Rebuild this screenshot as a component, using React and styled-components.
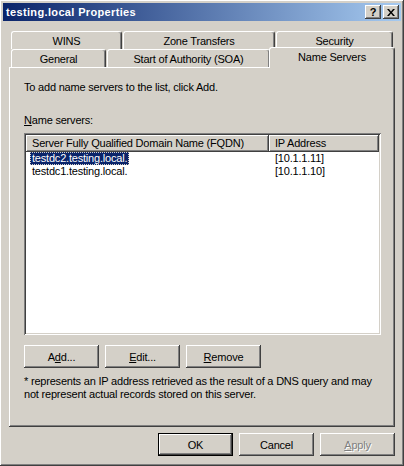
import styled, { createGlobalStyle } from "styled-components";

const Global = createGlobalStyle`
  html, body { margin: 0; padding: 0; background: #d4d0c8; }
  * { box-sizing: border-box; }
  body {
    font-family: "Liberation Sans", Arial, sans-serif;
    font-size: 11px;
    letter-spacing: -0.2px;
    color: #000;
  }
`;

const raised = `
  box-shadow: inset -1px -1px #404040, inset 1px 1px #ffffff,
    inset -2px -2px #808080, inset 2px 2px #d4d0c8;
`;

const Window = styled.div`
  width: 404px;
  height: 466px;
  padding: 3px;
  background: #d4d0c8;
  ${raised}
  display: flex;
  flex-direction: column;
`;

const TitleBar = styled.div`
  height: 18px;
  display: flex;
  align-items: center;
  padding: 0 2px 0 2px;
  background: linear-gradient(to right, #0a246a, #a6caf0);
`;

const Title = styled.span`
  flex: 1;
  color: #fff;
  font-weight: bold;
  font-size: 11px;
  letter-spacing: 0.35px;
  padding-left: 1px;
`;

const CaptionButton = styled.div`
  width: 16px;
  height: 14px;
  background: #d4d0c8;
  ${raised}
  display: flex;
  align-items: center;
  justify-content: center;
  font-weight: bold;
  font-size: 11px;
  letter-spacing: 0;
  line-height: 14px;
  margin-left: ${(p) => (p.$gap ? "2px" : "0")};
`;

const Body = styled.div`
  flex: 1;
  padding: 10px 6px 0 6px;
  display: flex;
  flex-direction: column;
`;

const TabRow = styled.div`
  display: flex;
  height: 18px;
  padding-left: 2px;
  gap: ${(p) => p.$gap || 1}px;
`;

const Tab = styled.div`
  position: relative;
  width: ${(p) => p.$w}px;
  height: ${(p) => (p.$active ? 21 : 18)}px;
  margin-top: ${(p) => (p.$active ? -2 : 0)}px;
  margin-left: ${(p) => (p.$active ? -2 : 0)}px;
  margin-right: ${(p) => (p.$active ? -2 : 0)}px;
  z-index: ${(p) => (p.$active ? 2 : 1)};
  background: #d4d0c8;
  border-top-left-radius: 3px;
  border-top-right-radius: 3px;
  border-top: 1px solid #fff;
  border-left: 1px solid #fff;
  border-right: 1px solid #404040;
  box-shadow: inset -1px 0 #808080;
  display: flex;
  align-items: ${(p) => (p.$active ? "flex-start" : "center")};
  padding-top: ${(p) => (p.$active ? 3 : 0)}px;
  justify-content: center;
  white-space: nowrap;
`;

const Panel = styled.div`
  height: 360px;
  background: #d4d0c8;
  box-shadow: inset -1px -1px #404040, inset 1px 1px #ffffff,
    inset -2px -2px #808080;
  padding: 14px 14px 0 15px;
  display: flex;
  flex-direction: column;
`;

const Line = styled.div`
  line-height: 13px;
  height: 13px;
  margin-top: ${(p) => p.$mt || 0}px;
  white-space: nowrap;
`;

const ListBox = styled.div`
  margin-top: 6px;
  width: 357px;
  height: 202px;
  background: #fff;
  padding: 2px;
  box-shadow: inset 1px 1px #808080, inset -1px -1px #fff,
    inset 2px 2px #404040, inset -2px -2px #d4d0c8;
`;

const HeaderRow = styled.div`
  display: grid;
  grid-template-columns: 243px 1fr;
  height: 17px;
`;

const HeaderCell = styled.div`
  background: #d4d0c8;
  ${raised}
  padding-left: 6px;
  line-height: 17px;
  white-space: nowrap;
  overflow: hidden;
`;

const Row = styled.div`
  display: grid;
  grid-template-columns: 243px 1fr;
  height: 13px;
  line-height: 13px;
`;

const Cell = styled.div`
  padding-left: ${(p) => p.$pl || 6}px;
  white-space: nowrap;
`;

const Selected = styled.span`
  display: inline-block;
  background: #0a246a;
  color: #fff;
  padding: 0 2px;
  outline: 1px dotted #d4d0c8;
  outline-offset: -1px;
`;

const ButtonRow = styled.div`
  display: flex;
  gap: 6px;
  justify-content: ${(p) => (p.$end ? "flex-end" : "flex-start")};
  margin-top: ${(p) => p.$mt || 0}px;
`;

const Button = styled.div`
  width: 75px;
  height: 23px;
  background: #d4d0c8;
  display: flex;
  align-items: center;
  justify-content: center;
  ${(p) =>
    p.$default
      ? `box-shadow: inset 0 0 0 1px #000, inset -2px -2px #404040, inset 2px 2px #ffffff, inset -3px -3px #808080;`
      : `box-shadow: inset -1px -1px #404040, inset 1px 1px #ffffff, inset -2px -2px #808080, inset 2px 2px #d4d0c8;`}
  color: ${(p) => (p.$disabled ? "#808080" : "#000")};
  text-shadow: ${(p) => (p.$disabled ? "1px 1px #fff" : "none")};
`;

export default function App() {
  return (
    <>
      <Global />
      <Window>
        <TitleBar>
          <Title>testing.local Properties</Title>
          <CaptionButton>?</CaptionButton>
          <CaptionButton $gap>
            <svg width="8" height="7" viewBox="0 0 8 7">
              <path d="M0 0h2l2 2.5L6 0h2L5 3.5 8 7H6L4 4.5 2 7H0l3-3.5z" fill="#000" />
            </svg>
          </CaptionButton>
        </TitleBar>
        <Body>
          <TabRow $gap={1}>
            <Tab $w={111}>WINS</Tab>
            <Tab $w={152}>Zone Transfers</Tab>
            <Tab $w={117}>Security</Tab>
          </TabRow>
          <TabRow $gap={1}>
            <Tab $w={95}>General</Tab>
            <Tab $w={163}>Start of Authority (SOA)</Tab>
            <Tab $w={126} $active>Name Servers</Tab>
          </TabRow>
          <Panel>
            <Line>To add name servers to the list, click Add.</Line>
            <Line $mt={20}>
              <u>N</u>ame servers:
            </Line>
            <ListBox>
              <HeaderRow>
                <HeaderCell>Server Fully Qualified Domain Name (FQDN)</HeaderCell>
                <HeaderCell>IP Address</HeaderCell>
              </HeaderRow>
              <Row>
                <Cell $pl={4}>
                  <Selected>testdc2.testing.local.</Selected>
                </Cell>
                <Cell>[10.1.1.11]</Cell>
              </Row>
              <Row>
                <Cell>testdc1.testing.local.</Cell>
                <Cell>[10.1.1.10]</Cell>
              </Row>
            </ListBox>
            <ButtonRow $mt={10}>
              <Button>
                A<u>d</u>d...
              </Button>
              <Button>
                <u>E</u>dit...
              </Button>
              <Button>
                <u>R</u>emove
              </Button>
            </ButtonRow>
            <Line $mt={7}>
              * represents an IP address retrieved as the result of a DNS query and may
            </Line>
            <Line>not represent actual records stored on this server.</Line>
          </Panel>
          <ButtonRow $end $mt={6}>
            <Button $default>OK</Button>
            <Button>Cancel</Button>
            <Button $disabled>
              <u>A</u>pply
            </Button>
          </ButtonRow>
        </Body>
      </Window>
    </>
  );
}
